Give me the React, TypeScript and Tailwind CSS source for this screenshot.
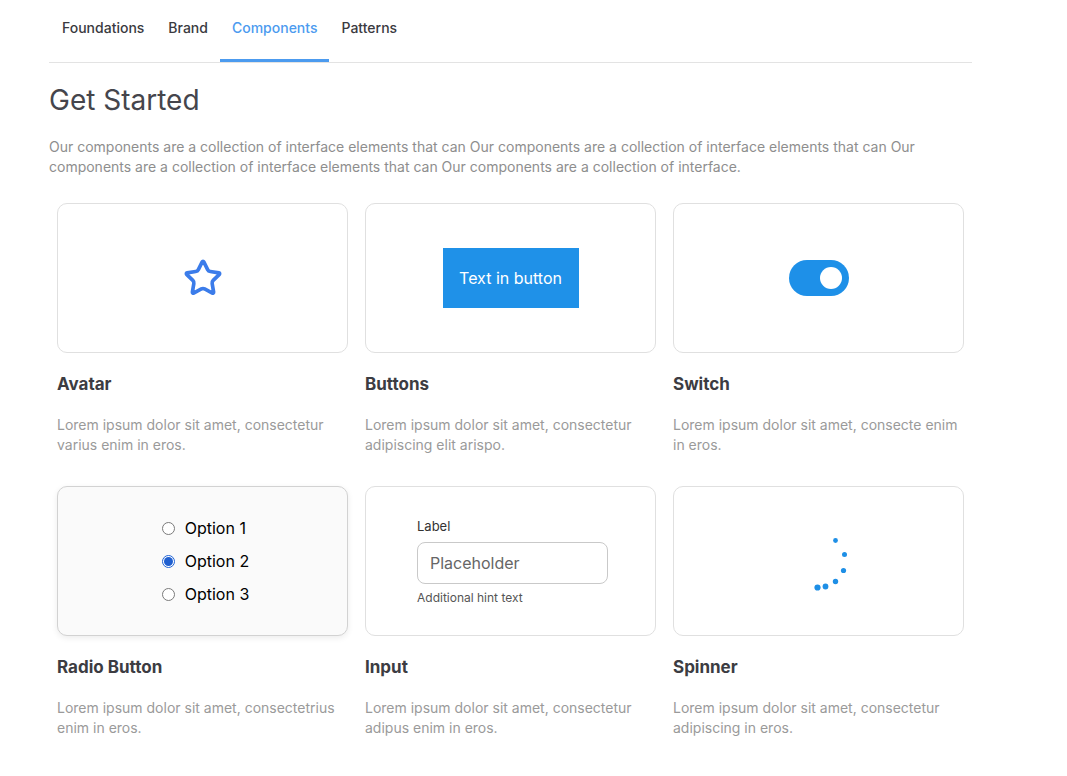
import { Star } from 'lucide-react';

const cards = [
  { title: 'Avatar', lines: ['Lorem ipsum dolor sit amet, consectetur', 'varius enim in eros.'], kind: 'avatar' },
  { title: 'Buttons', lines: ['Lorem ipsum dolor sit amet, consectetur', 'adipiscing elit arispo.'], kind: 'button' },
  { title: 'Switch', lines: ['Lorem ipsum dolor sit amet, consecte enim', 'in eros.'], kind: 'switch' },
  { title: 'Radio Button', lines: ['Lorem ipsum dolor sit amet, consectetrius', 'enim in eros.'], kind: 'radio' },
  { title: 'Input', lines: ['Lorem ipsum dolor sit amet, consectetur', 'adipus enim in eros.'], kind: 'input' },
  { title: 'Spinner', lines: ['Lorem ipsum dolor sit amet, consectetur', 'adipiscing in eros.'], kind: 'spinner' },
];

function Radio({ checked, label }: { checked?: boolean; label: string }) {
  return (
    <div className="flex items-center gap-[10px] h-[33px]">
      {checked ? (
        <span className="w-[13px] h-[13px] rounded-full border border-[#1f63d6] flex items-center justify-center bg-white">
          <span className="w-[9px] h-[9px] rounded-full bg-[#1f5fd0]" />
        </span>
      ) : (
        <span className="w-[13px] h-[13px] rounded-full border border-[#7a7a7a] bg-white" />
      )}
      <span className="text-[16px] text-black">{label}</span>
    </div>
  );
}

function Preview({ kind }: { kind: string }) {
  if (kind === 'avatar') {
    return <Star size={40} strokeWidth={2.2} color="#3b7cea" />;
  }
  if (kind === 'button') {
    return (
      <button className="w-[136px] h-[60px] bg-[#1f91e8] text-white text-[16px]">Text in button</button>
    );
  }
  if (kind === 'switch') {
    return (
      <div className="w-[60px] h-[36px] rounded-full bg-[#1e90e8] flex items-center justify-end pr-[7px]">
        <span className="w-[22px] h-[22px] rounded-full bg-white" />
      </div>
    );
  }
  if (kind === 'radio') {
    return (
      <div className="flex flex-col ml-[6px]">
        <Radio label="Option 1" />
        <Radio label="Option 2" checked />
        <Radio label="Option 3" />
      </div>
    );
  }
  if (kind === 'input') {
    return (
      <div className="flex flex-col w-[191px] ml-[4px] mt-[2px]">
        <span className="text-[13px] text-[#333333] mb-[6px]">Label</span>
        <div className="h-[42px] rounded-[8px] border border-[#c9c9c9] flex items-center px-[12px] text-[16px] text-[#666666]">
          Placeholder
        </div>
        <span className="text-[12px] text-[#555555] mt-[5px]">Additional hint text</span>
      </div>
    );
  }
  return (
    <svg width="60" height="60" viewBox="0 0 60 60">
      <g fill="#1e8fe6">
        <circle cx="46.5" cy="9.5" r="2.4" />
        <circle cx="55.5" cy="23.5" r="2.5" />
        <circle cx="54.5" cy="39.5" r="2.6" />
        <circle cx="46.5" cy="50.5" r="2.7" />
        <circle cx="36.5" cy="55.5" r="2.9" />
        <circle cx="28.5" cy="56.5" r="3.1" />
      </g>
    </svg>
  );
}

export default function App() {
  return (
    <div className="min-h-screen bg-white pl-[49px]" style={{ fontFamily: 'Inter, "Noto Sans", sans-serif' }}>
      <div className="w-[923px]">
        <nav className="flex border-b border-[#e3e3e3] pl-px">
          {['Foundations', 'Brand', 'Components', 'Patterns'].map((t) =>
            t === 'Components' ? (
              <div key={t} className="h-[62px] pt-[17px] px-[12px] text-[14px] font-medium text-[#4c9bef] border-b-[3px] border-[#4c9bef]">
                {t}
              </div>
            ) : (
              <div key={t} className="h-[62px] pt-[17px] px-[12px] text-[14px] font-medium text-[#3a3a40]">
                {t}
              </div>
            )
          )}
        </nav>
        <h1 className="mt-[19px] text-[28px] leading-[36px] text-[#45454c]">Get Started</h1>
        <p className="mt-[19px] text-[14px] leading-[20px] text-[#8e8e8e]">
          Our components are a collection of interface elements that can Our components are a collection of interface elements that can Our
          <br />
          components are a collection of interface elements that can Our components are a collection of interface.
        </p>
        <div className="mt-[26px] ml-[8px] grid grid-cols-[291px_291px_291px] gap-x-[17px] gap-y-[31px]">
          {cards.map((c) => (
            <div key={c.title} className="flex flex-col">
              <div
                className={
                  c.kind === 'radio'
                    ? 'h-[150px] rounded-[10px] border border-[#d2d2d2] bg-[#fafafa] shadow-[0_2px_6px_rgba(0,0,0,0.08)] flex items-center justify-center'
                    : 'h-[150px] rounded-[10px] border border-[#e0e0e0] bg-white flex items-center justify-center'
                }
              >
                <Preview kind={c.kind} />
              </div>
              <h2 className="mt-[19px] text-[17px] leading-[24px] font-bold text-[#3c3c42]">{c.title}</h2>
              <p className="mt-[19px] text-[14px] leading-[20px] text-[#9a9a9a]">
                {c.lines[0]}
                <br />
                {c.lines[1]}
              </p>
            </div>
          ))}
        </div>
      </div>
    </div>
  );
}
